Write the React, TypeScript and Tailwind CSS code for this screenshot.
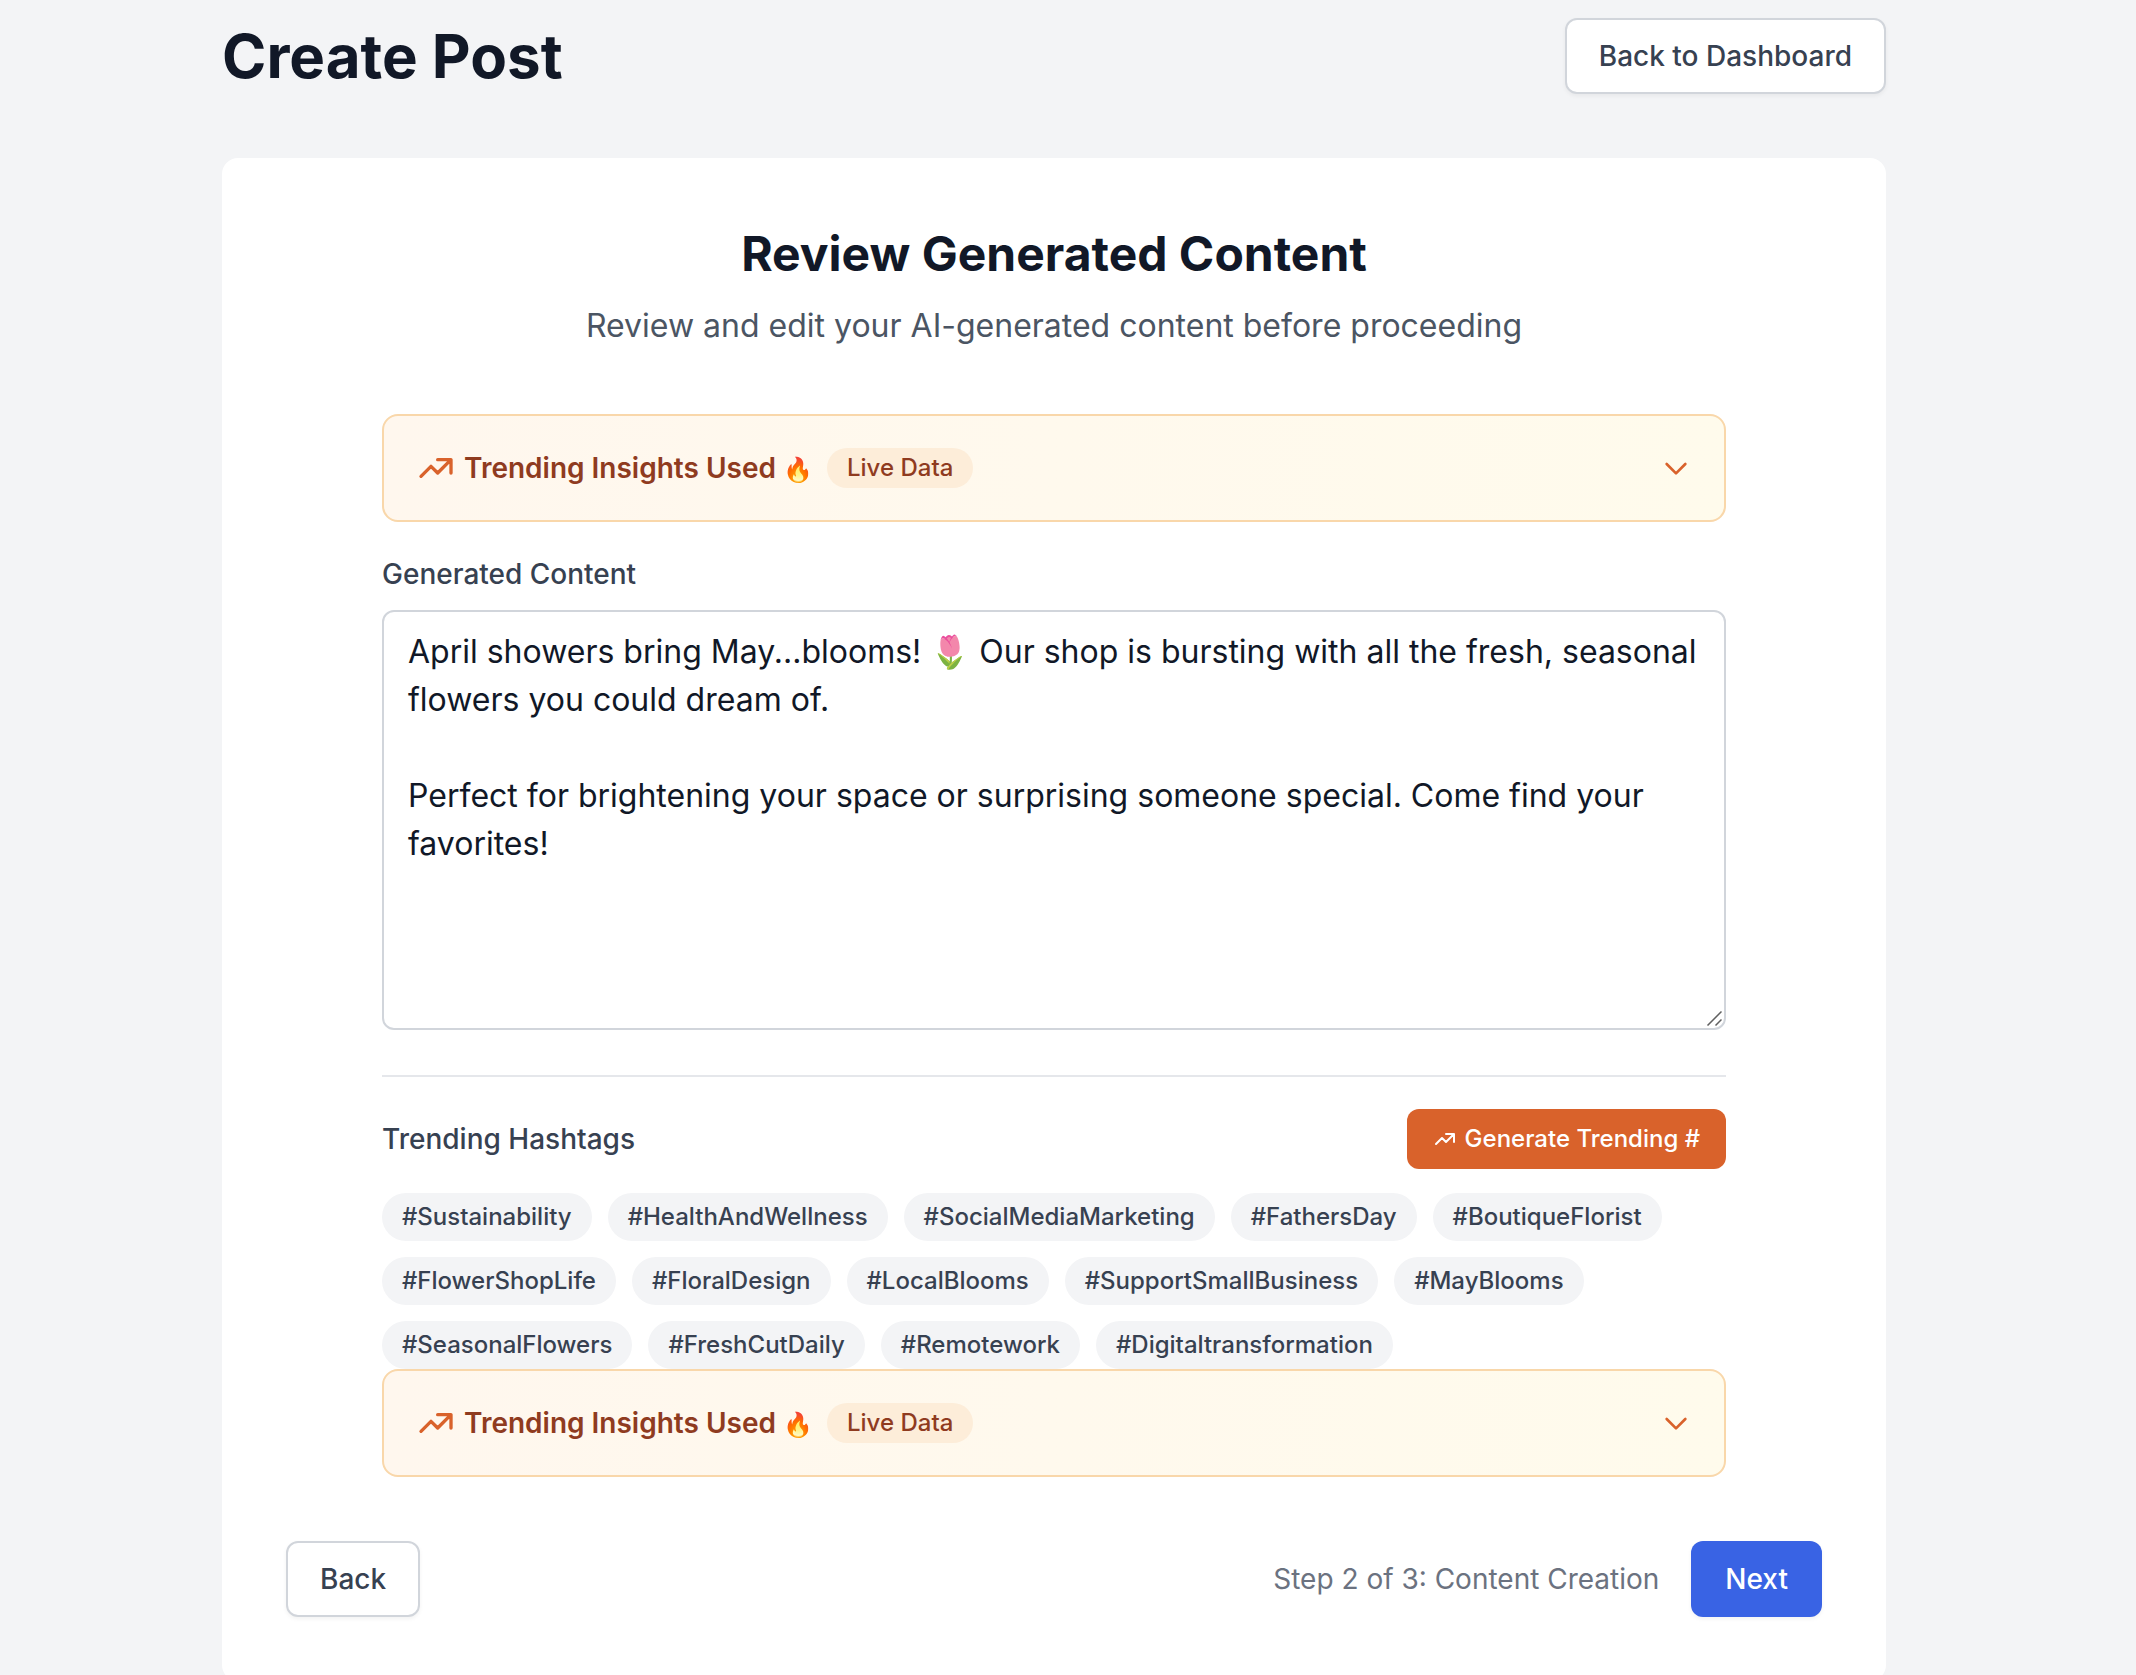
import { useState } from "react";

const HASHTAGS = [
  "#Sustainability",
  "#HealthAndWellness",
  "#SocialMediaMarketing",
  "#FathersDay",
  "#BoutiqueFlorist",
  "#FlowerShopLife",
  "#FloralDesign",
  "#LocalBlooms",
  "#SupportSmallBusiness",
  "#MayBlooms",
  "#SeasonalFlowers",
  "#FreshCutDaily",
  "#Remotework",
  "#Digitaltransformation",
];

const INITIAL_CONTENT = `April showers bring May...blooms! 🌷 Our shop is bursting with all the fresh, seasonal flowers you could dream of.

Perfect for brightening your space or surprising someone special. Come find your favorites!`;

function TrendingIcon({ className }: { className: string }) {
  return (
    <svg
      className={className}
      viewBox="0 0 24 24"
      fill="none"
      stroke="currentColor"
      strokeWidth={2}
      strokeLinecap="round"
      strokeLinejoin="round"
      aria-hidden="true"
    >
      <path d="M13 7h8m0 0v8m0-8l-8 8-4-4-6 6" />
    </svg>
  );
}

function TrendingInsights() {
  const [open, setOpen] = useState(false);

  return (
    <section className="rounded-2xl border-2 border-[#f9d7aa] bg-linear-to-r from-[#fff7ee] to-[#fffbec] p-8">
      <button
        type="button"
        aria-expanded={open}
        onClick={() => setOpen(!open)}
        className="flex w-full items-center justify-between"
      >
        <span className="flex items-center">
          <TrendingIcon className="mr-2 size-10 text-[#d9622b]" />
          <span className="text-[28px] leading-10 font-semibold text-[#8f3b1f]">
            Trending Insights Used <span className="text-2xl">🔥</span>
          </span>
          <span className="ml-3.5 rounded-full bg-[#fdedd9] px-5 py-1 text-2xl font-medium text-[#8f3b1f]">
            Live Data
          </span>
        </span>
        <svg
          className={open ? "size-8 rotate-180" : "size-8"}
          viewBox="0 0 24 24"
          fill="none"
          stroke="#d9622b"
          strokeWidth={2}
          strokeLinecap="round"
          strokeLinejoin="round"
          aria-hidden="true"
        >
          <path d="M19 9l-7 7-7-7" />
        </svg>
      </button>
    </section>
  );
}

export default function App() {
  const [content, setContent] = useState(INITIAL_CONTENT);

  return (
    <div className="min-h-screen bg-[#f3f4f6] pt-[18px] pr-7 font-['Inter',sans-serif]">
      <main className="mx-auto w-full max-w-[1664px]">
        <header className="mb-16 flex items-center justify-between">
          <h1 className="text-6xl font-bold text-[#111827]">Create Post</h1>
          <button
            type="button"
            className="rounded-xl border-2 border-[#d1d5db] bg-white px-8 py-4 text-[28px] leading-10 font-medium text-[#374151] shadow-[0_2px_4px_rgba(0,0,0,0.05)]"
          >
            Back to Dashboard
          </button>
        </header>

        <div className="rounded-2xl bg-white p-16">
          <div className="mb-16 text-center">
            <h2 className="mb-4 text-5xl leading-16 font-bold text-[#111827]">
              Review Generated Content
            </h2>
            <p className="text-[32px] leading-12 text-[#4b5563]">
              Review and edit your AI-generated content before proceeding
            </p>
          </div>

          <div className="mx-auto max-w-[1344px]">
            <TrendingInsights />

            <label
              htmlFor="content"
              className="mt-8 mb-4 block text-[28px] leading-10 font-medium text-[#374151]"
            >
              Generated Content
            </label>
            <div className="relative">
              <textarea
                id="content"
                rows={8}
                value={content}
                onChange={(e) => setContent(e.target.value)}
                className="block w-full resize-y rounded-xl border-2 border-[#d1d5db] bg-white px-6 py-4 text-[32px] leading-12 text-[#111827] [&::-webkit-resizer]:bg-transparent"
              />
              {/* Resize grip */}
              <svg
                className="pointer-events-none absolute right-1 bottom-1 size-4"
                viewBox="0 0 16 16"
                stroke="#606060"
                strokeWidth={1.5}
                aria-hidden="true"
              >
                <path d="M1.5 15.5l14-14M9.5 15.5l6-6" />
              </svg>
            </div>

            <div className="mt-[45px] border-t-2 border-[#e5e7eb] pt-8">
              <div className="mb-6 flex items-center justify-between">
                <h3 className="text-[28px] leading-10 font-medium text-[#374151]">
                  Trending Hashtags
                </h3>
                <button
                  type="button"
                  className="flex items-center gap-2 rounded-xl border-2 border-transparent bg-[#d9622b] px-6 py-3 text-2xl font-medium text-white"
                >
                  <TrendingIcon className="size-6" />
                  Generate Trending #
                </button>
              </div>
              <ul className="flex flex-wrap gap-4">
                {HASHTAGS.map((tag) => (
                  <li
                    key={tag}
                    className="rounded-full bg-[#f3f4f6] px-5 py-2 text-2xl font-medium text-[#374151]"
                  >
                    {tag}
                  </li>
                ))}
              </ul>
            </div>

            <TrendingInsights />
          </div>

          <footer className="mt-16 flex items-center justify-between">
            <button
              type="button"
              className="rounded-xl border-2 border-[#d1d5db] bg-white px-8 py-4 text-[28px] leading-10 font-medium text-[#374151] shadow-[0_2px_4px_rgba(0,0,0,0.05)]"
            >
              Back
            </button>
            <div className="flex items-center gap-8">
              <span className="text-[28px] leading-10 text-[#6b7280]">
                Step 2 of 3: Content Creation
              </span>
              <button
                type="button"
                className="rounded-xl border-2 border-transparent bg-[#3963e4] px-8 py-4 text-[28px] leading-10 font-medium text-white shadow-[0_2px_4px_rgba(0,0,0,0.05)]"
              >
                Next
              </button>
            </div>
          </footer>
        </div>
      </main>
    </div>
  );
}
